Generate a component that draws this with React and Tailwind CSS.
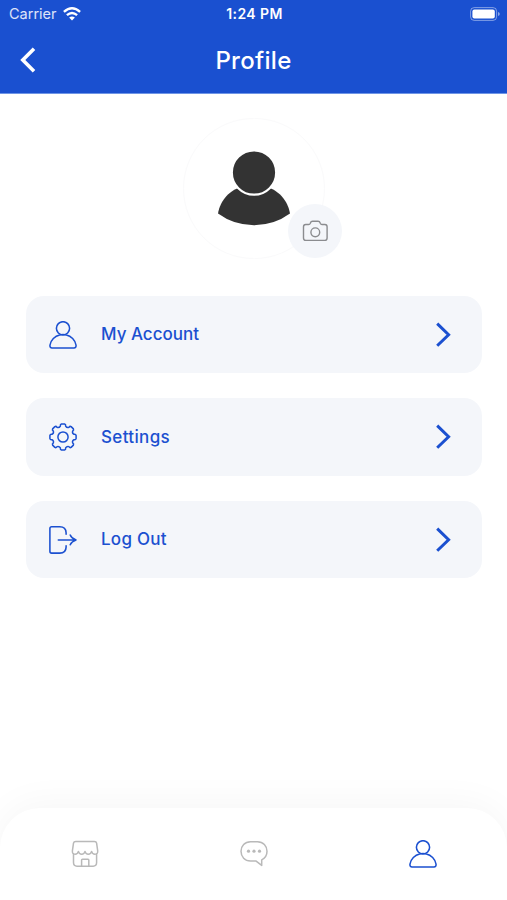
const GearIcon = () => {
  // eight teeth, each one drawn as valley -> tip -> valley
  const at = (deg, r) => {
    const a = ((deg - 90) * Math.PI) / 180
    return `${(14 + r * Math.cos(a)).toFixed(2)} ${(14 + r * Math.sin(a)).toFixed(2)}`
  }
  const teeth = [...Array(8)].map((_, i) => {
    const c = i * 45
    return `L${at(c - 13.5, 11.3)} Q${at(c - 13, 13.1)} ${at(c - 7, 13.2)} L${at(c + 7, 13.2)} Q${at(c + 13, 13.1)} ${at(c + 13.5, 11.3)} Q${at(c + 22.5, 9.8)} ${at(c + 31.5, 11.3)}`
  })
  const d = `M${at(-13.5, 11.3)} ${teeth.join(' ')} Z`

  return (
    <svg width="28" height="28" viewBox="0 0 28 28" fill="none" stroke="currentColor" strokeWidth="1.5" strokeLinejoin="round">
      <path d={d} />
      <circle cx="14" cy="14" r="5.1" />
    </svg>
  )
}

const UserIcon = () => (
  <svg width="28" height="28" viewBox="0 0 28 28" fill="none" stroke="currentColor" strokeWidth="1.55" strokeLinejoin="round">
    <circle cx="14" cy="7.3" r="6.6" />
    <path d="M10.6 13.9C6 14.8 1.7 19.2 1 24C.7 26 1.6 27 3 27H25C26.4 27 27.3 26 27 24C26.3 19.2 22 14.8 17.4 13.9C15.2 13.4 12.8 13.4 10.6 13.9Z" />
  </svg>
)

const LogOutIcon = () => (
  <svg width="28" height="28" viewBox="0 0 28 28" fill="none" stroke="currentColor" strokeWidth="1.55" strokeLinecap="round" strokeLinejoin="round">
    <path d="M17.1 8.2V6.8Q16.9 .8 10.8 .8H2.6Q.9 .8 .9 2.5V25.3Q.9 27.1 2.6 27.1H10.8Q16.9 27.1 17.1 21.1V19.7" />
    <path d="M9.3 13.9H27M21.2 9Q22.6 12.4 27 13.9Q22.6 15.4 21.2 18.8" />
  </svg>
)

const StoreIcon = () => (
  <svg width="28" height="28" viewBox="0 0 28 28" fill="none" stroke="currentColor" strokeWidth="1.5" strokeLinecap="round" strokeLinejoin="round">
    <path d="M4.8 1.4H23.4Q25.3 1.4 25.6 3.2L26.7 10.9Q27 14.2 23.9 14.2Q21.3 14.2 20.6 11.4Q19.9 14.2 17.3 14.2Q14.7 14.2 14 11.4Q13.3 14.2 10.7 14.2Q8.1 14.2 7.4 11.4Q6.7 14.2 4.1 14.2Q1.1 14.2 1.4 10.9L2.5 3.2Q2.8 1.4 4.8 1.4Z" />
    <path d="M2.5 13.8V22.6Q2.5 26.2 6 26.2H22.1Q25.6 26.2 25.6 22.6V13.8" />
    <path d="M10.6 26V20.1Q10.6 19.3 11.4 19.3H17Q17.8 19.3 17.8 20.1V26" />
  </svg>
)

const ChatIcon = () => (
  <svg width="28" height="28" viewBox="0 0 28 28" fill="none" stroke="currentColor" strokeWidth="1.5" strokeLinejoin="round">
    <path d="M10.5 1.7H17.5C23.2 1.7 27 5.9 27 11.3C27 15.3 24.9 18.3 21.7 19.9V25.4L15.8 20.9H10.5C4.8 20.9 1 16.8 1 11.3C1 5.9 4.8 1.7 10.5 1.7Z" />
    <g fill="currentColor" stroke="none">
      <circle cx="8.5" cy="11.2" r="1.6" />
      <circle cx="14" cy="11.2" r="1.6" />
      <circle cx="19.5" cy="11.2" r="1.6" />
    </g>
  </svg>
)

const CameraIcon = () => (
  <svg width="26" height="22" viewBox="0 0 26 22" fill="none" stroke="currentColor" strokeWidth="1.4" strokeLinejoin="round">
    <path d="M3.7 4.5H6.6Q7.8 4.5 8.3 3.2Q8.9 1.3 10.6 1.3H16Q17.7 1.3 18.3 3.2Q18.8 4.5 20 4.5H22.9Q25.1 4.5 25.1 6.8V18Q25.1 20.4 22.9 20.4H3.7Q1.5 20.4 1.5 18V6.8Q1.5 4.5 3.7 4.5Z" />
    <circle cx="13.3" cy="12.3" r="4.4" />
  </svg>
)

const StatusBar = () => (
  <div className="grid h-[27px] grid-cols-3 items-center pl-[9px] pr-[7px]">
    <div className="flex items-center gap-[6px] text-[14.5px] text-white/85">
      <span>Carrier</span>
      <svg width="18" height="14" viewBox="0 0 18 14" fill="none" stroke="white" strokeWidth="2.4">
        <path d="M.9 4.9Q9 -2.3 17.1 4.9" />
        <path d="M3.9 8.1Q9 3.7 14.1 8.1" />
        <path d="M9 13.5L6.1 10.6Q9 8.3 11.9 10.6Z" fill="white" stroke="none" />
      </svg>
    </div>
    <span className="text-center text-[14px] font-semibold tracking-[0.4px]">1:24 PM</span>
    <svg className="justify-self-end" width="30" height="14" viewBox="0 0 30 14">
      <rect x=".6" y=".6" width="26" height="12.8" rx="3.6" fill="none" stroke="white" strokeOpacity=".45" />
      <rect x="2.4" y="2.4" width="22.4" height="9.2" rx="2" fill="white" />
      <path d="M28 4.9Q29.8 5.5 29.8 7Q29.8 8.5 28 9.1Z" fill="white" fillOpacity=".5" />
    </svg>
  </div>
)

const Avatar = () => (
  <div className="relative h-[141px] w-[142px] rounded-full border border-[#fafafb]">
    <svg className="h-full w-full" viewBox="0 0 140 139">
      <path d="M34 94.5C36 82 46 69.5 60 67.5H80C94 69.5 104 82 106 94.5Q90 106.2 70 106.2Q50 106.2 34 94.5Z" fill="#333333" />
      <circle cx="70" cy="53.5" r="22.2" fill="#333333" stroke="white" strokeWidth="2.2" />
    </svg>
    <button className="absolute -right-[18px] top-[85px] flex h-[54px] w-[54px] items-center justify-center rounded-full bg-[#f4f6fa] text-[#8b8c8f]">
      <CameraIcon />
    </button>
  </div>
)

const MenuRow = ({ icon, label, tracking }) => (
  <button className="flex h-[77.5px] w-full items-center rounded-[18px] bg-[#f4f6fa] pl-[23px] pr-[30px] pt-px text-[#1b50d0]">
    {icon}
    <span className={`ml-[24px] flex-1 text-left text-[17px] font-medium ${tracking}`}>{label}</span>
    <svg width="17" height="26" viewBox="0 0 17 26" fill="none" stroke="currentColor" strokeWidth="3">
      <path d="M2.2 1.6L13.6 12.7L2.2 23.8" />
    </svg>
  </button>
)

const menu = [
  { label: 'My Account', icon: <UserIcon />, tracking: 'tracking-normal' },
  { label: 'Settings', icon: <GearIcon />, tracking: 'tracking-[0.35px]' },
  { label: 'Log Out', icon: <LogOutIcon />, tracking: 'tracking-[0.25px]' },
]

const App = () => {
  return (
    <div className="flex h-[900px] w-[507px] flex-col overflow-hidden bg-white font-['Inter','Liberation_Sans',sans-serif]">
      <header className="h-[94px] shrink-0 border-b border-[#6f95e6] bg-[#1a50d0] text-white">
        <StatusBar />
        <div className="grid h-[66px] grid-cols-3 items-center px-[20px]">
          <svg width="17" height="26" viewBox="0 0 17 26" fill="none" stroke="white" strokeWidth="3.6">
            <path d="M14 1.8L2.8 13L14 24.2" />
          </svg>
          <h1 className="pt-px text-center text-[24px] font-medium tracking-[0.3px]">Profile</h1>
        </div>
      </header>

      <main className="flex flex-1 flex-col items-center pt-[24px]">
        <Avatar />
        <div className="mt-[36.5px] flex w-full flex-col gap-[25px] pl-[26px] pr-[25px]">
          {menu.map((item) => (
            <MenuRow key={item.label} {...item} />
          ))}
        </div>
      </main>

      <nav className="grid h-[92px] shrink-0 grid-cols-3 justify-items-center rounded-t-[40px] bg-white pt-[32px] text-[#b9b9b9] shadow-[0_-4px_38px_rgba(0,0,0,0.04)]">
        <StoreIcon />
        <ChatIcon />
        <span className="text-[#1b50d0]">
          <UserIcon />
        </span>
      </nav>
    </div>
  )
}

export default App
